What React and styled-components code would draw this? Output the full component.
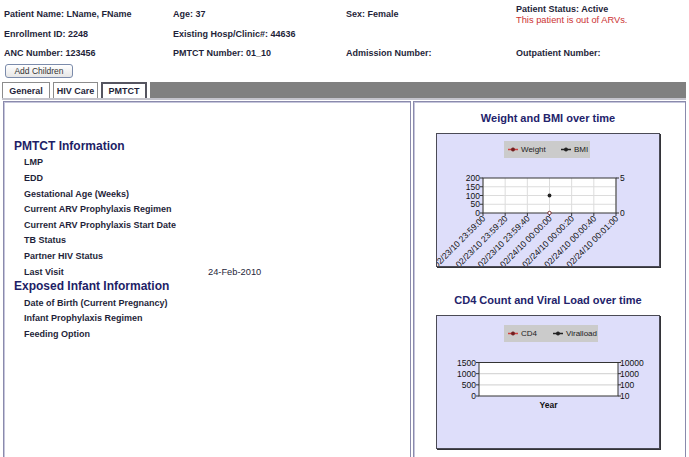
import React from 'react';
import styled, { createGlobalStyle } from 'styled-components';

const GlobalStyle = createGlobalStyle`
    html, body {
        margin: 0;
        padding: 0;
        background: #ffffff;
        font-family: "Liberation Sans", Arial, sans-serif;
        color: #1f1f3a;
    }
`;

const Page = styled.div`
    width: 689px;
    height: 457px;
    overflow: hidden;
`;

const Header = styled.div`
    display: grid;
    grid-template-columns: 169px 173px 170px 1fr;
    grid-template-rows: 21px 19px 19px;
    align-items: center;
    padding: 4px 0 0 4px;
`;

const Field = styled.div`
    font-size: 9px;
    font-weight: bold;
    line-height: 11px;
    white-space: nowrap;
`;

const Warning = styled.div`
    font-size: 9.3px;
    font-weight: normal;
    color: #cc3333;
`;

const AddButton = styled.button`
    display: block;
    margin: 1px 0 0 5px;
    width: 68px;
    height: 14px;
    padding: 0;
    font-family: "Liberation Sans", Arial, sans-serif;
    font-size: 8.5px;
    color: #333333;
    background: linear-gradient(#ffffff, #e6e6e6);
    border: 1px solid #7b8bab;
    border-radius: 3px;
`;

const TabBar = styled.div`
    display: flex;
    gap: 3px;
    height: 16px;
    margin: 4px 3px 0 2px;
    border-bottom: 2px solid #c4c4cc;
`;

const Tab = styled.div`
    width: ${p => p.width}px;
    box-sizing: border-box;
    display: flex;
    align-items: center;
    justify-content: center;
    font-size: 9px;
    font-weight: bold;
    background: #ffffff;
    border: ${p => (p.active ? '2px solid #555560' : '1px solid #8c8c8c')};
    border-bottom: none;
`;

const TabFiller = styled.div`
    flex: 1;
    background: #808080;
`;

const Content = styled.div`
    display: flex;
    gap: 2px;
    margin: 1px 3px 0 3px;
    height: 380px;
`;

const Panel = styled.div`
    box-sizing: border-box;
    border: 1px solid #8a8aac;
    box-shadow: inset 1px 1px 0 #c6c6dc;
`;

const InfoPanel = styled(Panel)`
    width: 408px;
    padding: 37px 0 0 10px;
`;

const ChartPanel = styled(Panel)`
    flex: 1;
    display: flex;
    flex-direction: column;
    align-items: center;
    padding-top: 9px;
    padding-right: 3px;
`;

const SectionTitle = styled.div`
    height: 15.6px;
    line-height: 15.6px;
    font-size: 12px;
    font-weight: bold;
    color: #1e1e66;
`;

const Row = styled.div`
    display: flex;
    height: 15.6px;
    align-items: center;
    padding-left: 10px;
`;

const Label = styled.div`
    width: 184px;
    font-size: 9px;
    font-weight: bold;
`;

const Value = styled.div`
    font-size: 9.3px;
`;

const ChartTitle = styled.div`
    height: 14px;
    line-height: 14px;
    font-size: 11px;
    font-weight: bold;
    color: #23236b;
    margin-top: ${p => p.top || 0}px;
`;

const ChartFrame = styled.div`
    width: 224px;
    height: 134px;
    margin-top: 8px;
    box-sizing: border-box;
    background: #dedefa;
    border: 1px solid #4a4a55;
    box-shadow: 1px 1px 0 #333338;
    overflow: hidden;
`;

const ChartSvg = styled.svg`
    display: block;
    font-family: "Liberation Sans", Arial, sans-serif;
`;

const pmtctRows = [
    ['LMP', ''],
    ['EDD', ''],
    ['Gestational Age (Weeks)', ''],
    ['Current ARV Prophylaxis Regimen', ''],
    ['Current ARV Prophylaxis Start Date', ''],
    ['TB Status', ''],
    ['Partner HIV Status', ''],
    ['Last Visit', '24-Feb-2010'],
];

const infantRows = ['Date of Birth (Current Pregnancy)', 'Infant Prophylaxis Regimen', 'Feeding Option'];

const times = [
    '02/23/10 23:59:00',
    '02/23/10 23:59:20',
    '02/23/10 23:59:40',
    '02/24/10 00:00:00',
    '02/24/10 00:00:20',
    '02/24/10 00:00:40',
    '02/24/10 00:01:00',
];

const Legend = ({ x, width, y, items }) => (
    <g>
        <rect x={x} y={y} width={width} height={17} fill="#cbcbcb" />
        {items.map(item => (
            <g key={item.name}>
                <line x1={item.x} y1={y + 8.5} x2={item.x + 10} y2={y + 8.5} stroke={item.color} strokeWidth="1.5" />
                <circle cx={item.x + 5} cy={y + 8.5} r="1.7" fill={item.dot} stroke={item.dot} strokeWidth="0.6" />
                <text x={item.x + 13} y={y + 11} fontSize="8" fill="#222">{item.name}</text>
            </g>
        ))}
    </g>
);

const WeightChart = () => {
    const left = 46, right = 179, top = 44, bottom = 79;
    const step = (right - left) / 6;
    const yStep = (bottom - top) / 4;
    return (
        <ChartSvg width="222" height="132" viewBox="0 0 222 132">
            <Legend x={67} width={86} y={7} items={[
                { name: 'Weight', x: 71, color: '#d04040', dot: '#702020' },
                { name: 'BMI', x: 124, color: '#222', dot: '#222' },
            ]} />
            <rect x={left} y={top} width={right - left} height={bottom - top} fill="#fff" />
            {times.map((t, i) => (
                <line key={t} x1={left + i * step} y1={top} x2={left + i * step} y2={bottom} stroke="#dcdcdc" />
            ))}
            {[1, 2, 3].map(j => (
                <line key={j} x1={left} y1={top + j * yStep} x2={right} y2={top + j * yStep} stroke="#dcdcdc" />
            ))}
            <rect x={left} y={top} width={right - left} height={bottom - top} fill="none" stroke="#333" strokeWidth="1" />
            {['200', '150', '100', '50', '0'].map((v, j) => (
                <g key={v}>
                    <line x1={left - 3} y1={top + j * yStep} x2={left} y2={top + j * yStep} stroke="#333" />
                    <text x={left - 3} y={top + j * yStep + 3} fontSize="8.5" textAnchor="end" fill="#111">{v}</text>
                </g>
            ))}
            <line x1={right} y1={top} x2={right + 3} y2={top} stroke="#333" />
            <line x1={right} y1={bottom} x2={right + 3} y2={bottom} stroke="#333" />
            <text x={right + 4} y={top + 3} fontSize="8.5" fill="#111">5</text>
            <text x={right + 4} y={bottom + 3} fontSize="8.5" fill="#111">0</text>
            {times.map((t, i) => (
                <g key={t}>
                    <line x1={left + i * step} y1={bottom} x2={left + i * step} y2={bottom + 3} stroke="#333" />
                    <text
                        x={left + i * step + 3}
                        y={bottom + 6}
                        fontSize="8.6"
                        textAnchor="end"
                        fill="#111"
                        transform={`rotate(-45 ${left + i * step + 3} ${bottom + 6})`}
                    >
                        {t}
                    </text>
                </g>
            ))}
            <circle cx={left + 3 * step} cy={top + 2 * yStep} r="1.9" fill="#222" />
            <circle cx={left + 3 * step} cy={bottom} r="1.7" fill="#fff" stroke="#702020" strokeWidth="0.9" />
        </ChartSvg>
    );
};

const CD4Chart = () => {
    const left = 42, right = 181, top = 46.5, bottom = 80;
    const yStep = (bottom - top) / 3;
    return (
        <ChartSvg width="222" height="132" viewBox="0 0 222 132">
            <Legend x={67} width={94} y={9} items={[
                { name: 'CD4', x: 71, color: '#d04040', dot: '#702020' },
                { name: 'Viralload', x: 116, color: '#222', dot: '#222' },
            ]} />
            <rect x={left} y={top} width={right - left} height={bottom - top} fill="#fff" />
            {[1, 2].map(j => (
                <line key={j} x1={left} y1={top + j * yStep} x2={right} y2={top + j * yStep} stroke="#d8d8d8" strokeWidth="1.4" />
            ))}
            <rect x={left} y={top} width={right - left} height={bottom - top} fill="none" stroke="#333" strokeWidth="1" />
            {['1500', '1000', '500', '0'].map((v, j) => (
                <g key={v}>
                    <line x1={left - 3} y1={top + j * yStep} x2={left} y2={top + j * yStep} stroke="#333" />
                    <text x={left - 3} y={top + j * yStep + 3} fontSize="8.5" textAnchor="end" fill="#111">{v}</text>
                </g>
            ))}
            {['10000', '1000', '100', '10'].map((v, j) => (
                <g key={v}>
                    <line x1={right} y1={top + j * yStep} x2={right + 3} y2={top + j * yStep} stroke="#333" />
                    <text x={right + 2} y={top + j * yStep + 3} fontSize="8.5" fill="#111">{v}</text>
                </g>
            ))}
            <text x={(left + right) / 2} y={92} fontSize="8.5" fontWeight="bold" textAnchor="middle" fill="#111">Year</text>
        </ChartSvg>
    );
};

const App = () => {
    return (
        <Page>
            <GlobalStyle />
            <Header>
                <Field>Patient Name: LName, FName</Field>
                <Field>Age: 37</Field>
                <Field>Sex: Female</Field>
                <Field>
                    Patient Status: Active
                    <Warning>This patient is out of ARVs.</Warning>
                </Field>
                <Field>Enrollment ID: 2248</Field>
                <Field>Existing Hosp/Clinic#: 44636</Field>
                <Field />
                <Field />
                <Field>ANC Number: 123456</Field>
                <Field>PMTCT Number: 01_10</Field>
                <Field>Admission Number:</Field>
                <Field>Outpatient Number:</Field>
            </Header>
            <AddButton>Add Children</AddButton>
            <TabBar>
                <Tab width={48}>General</Tab>
                <Tab width={45}>HIV Care</Tab>
                <Tab width={46} active>PMTCT</Tab>
                <TabFiller />
            </TabBar>
            <Content>
                <InfoPanel>
                    <SectionTitle>PMTCT Information</SectionTitle>
                    {pmtctRows.map(([label, value]) => (
                        <Row key={label}>
                            <Label>{label}</Label>
                            <Value>{value}</Value>
                        </Row>
                    ))}
                    <SectionTitle>Exposed Infant Information</SectionTitle>
                    {infantRows.map(label => (
                        <Row key={label}>
                            <Label>{label}</Label>
                        </Row>
                    ))}
                </InfoPanel>
                <ChartPanel>
                    <ChartTitle>Weight and BMI over time</ChartTitle>
                    <ChartFrame>
                        <WeightChart />
                    </ChartFrame>
                    <ChartTitle top={26}>CD4 Count and Viral Load over time</ChartTitle>
                    <ChartFrame>
                        <CD4Chart />
                    </ChartFrame>
                </ChartPanel>
            </Content>
        </Page>
    );
};

export default App;
